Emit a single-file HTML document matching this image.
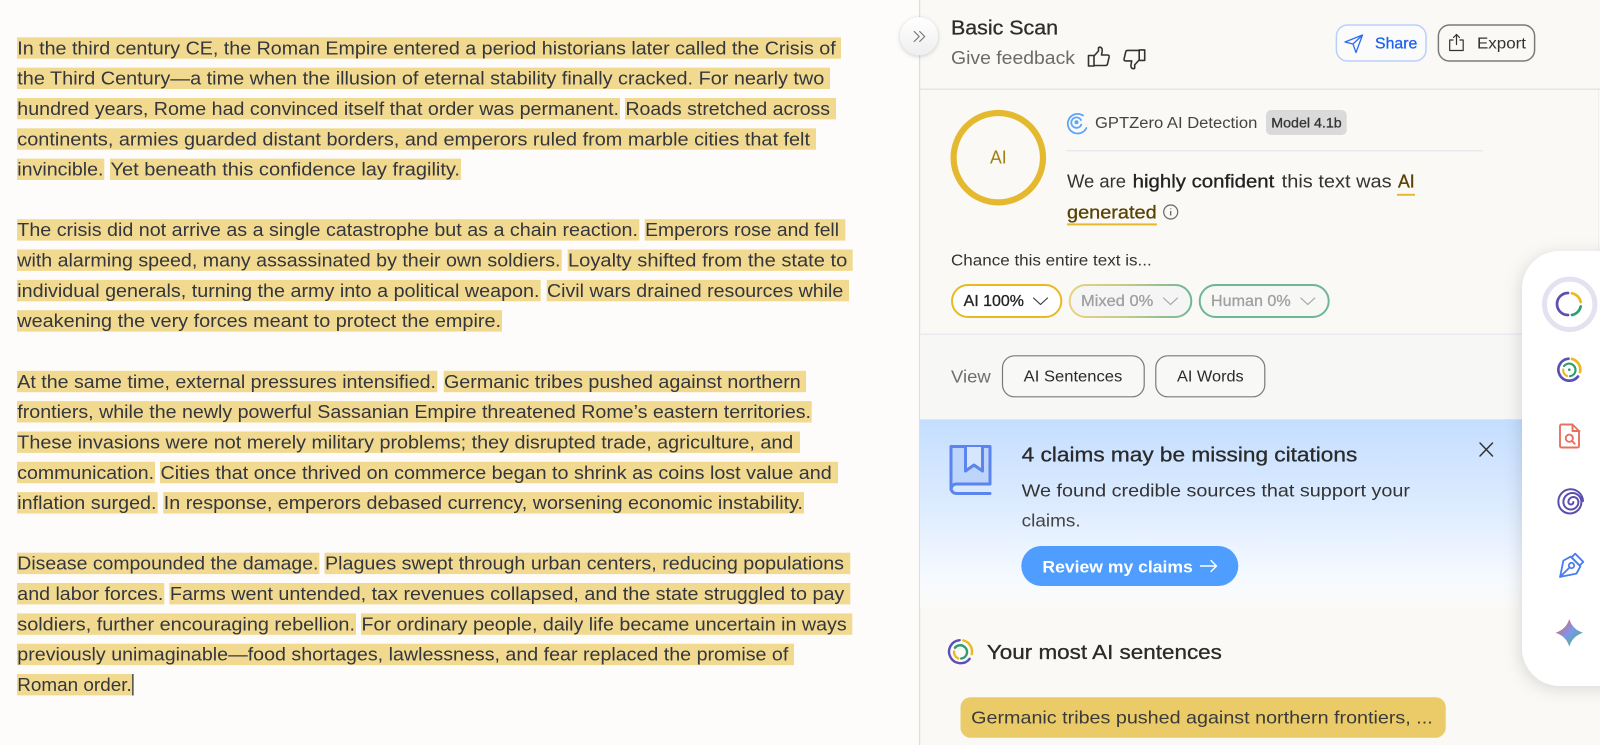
<!DOCTYPE html>
<html lang="en"><head><meta charset="utf-8"><title>Basic Scan</title>
<style>
html,body{margin:0;padding:0;width:1600px;height:745px;overflow:hidden;background:#fdfcfb}
svg{display:block}
text{font-family:"Liberation Sans",Arial,sans-serif}
.b text{font-size:18px;fill:#34363e}
.h rect{fill:#f1da90;height:21.4px}
.m{stroke:currentColor;stroke-width:.3px}
.ic{fill:none;stroke-linecap:round;stroke-linejoin:round}
</style></head><body>
<svg width="1600" height="745" viewBox="0 0 1600 745" xmlns="http://www.w3.org/2000/svg">
<defs>
<linearGradient id="blue" x1="0" y1="0" x2="0" y2="1"><stop offset="0" stop-color="#c4deff"/><stop offset=".45" stop-color="#dcebff"/><stop offset=".85" stop-color="#f6faff"/><stop offset="1" stop-color="#fbfaf8"/></linearGradient>
<linearGradient id="mix" gradientUnits="userSpaceOnUse" x1="1069" y1="0" x2="1192" y2="0"><stop offset="0" stop-color="#ead27e"/><stop offset=".45" stop-color="#c5cb86"/><stop offset="1" stop-color="#6fb698"/></linearGradient>
<linearGradient id="star" x1="0" y1="0" x2="1" y2="1"><stop offset=".1" stop-color="#e2645e"/><stop offset=".5" stop-color="#7a98ee"/><stop offset=".9" stop-color="#4fb07a"/></linearGradient>
<linearGradient id="cb" x1="0" y1="0" x2="0" y2="1"><stop offset="0" stop-color="#fff"/><stop offset="1" stop-color="#eeeef0"/></linearGradient>
<filter id="sh" x="-30%" y="-10%" width="160%" height="120%"><feDropShadow dx="-2" dy="3" stdDeviation="8" flood-color="#000" flood-opacity=".13"/></filter>
<filter id="sh2" x="-40%" y="-40%" width="180%" height="180%"><feDropShadow dx="0" dy="1" stdDeviation="2" flood-color="#000" flood-opacity=".2"/></filter>
</defs>

<rect width="1600" height="745" fill="#fdfcfb"/>

<g class="h">
<rect x="17" y="37.3" width="824"/>
<rect x="17" y="67.6" width="813"/>
<rect x="17" y="98" width="603"/><rect x="625" y="98" width="211"/>
<rect x="17" y="128.3" width="799"/>
<rect x="17" y="158.6" width="87.3"/><rect x="110" y="158.6" width="351"/>
<rect x="17" y="219.2" width="622.3"/><rect x="644.7" y="219.2" width="200.6"/>
<rect x="17" y="249.5" width="544.7"/><rect x="567.7" y="249.5" width="285"/>
<rect x="17" y="279.9" width="523.7"/><rect x="546.7" y="279.9" width="302.3"/>
<rect x="17" y="310.2" width="485"/>
<rect x="17" y="370.8" width="420.3"/><rect x="443.7" y="370.8" width="362.3"/>
<rect x="17" y="401.1" width="794.7"/>
<rect x="17" y="431.5" width="783"/>
<rect x="17" y="461.8" width="138"/><rect x="160" y="461.8" width="678"/>
<rect x="17" y="492.1" width="140.7"/><rect x="163.3" y="492.1" width="640.7"/>
<rect x="17" y="552.7" width="302.4"/><rect x="324.5" y="552.7" width="525.8"/>
<rect x="17" y="583" width="147.3"/><rect x="169.4" y="583" width="680.9"/>
<rect x="17" y="613.4" width="339"/><rect x="361" y="613.4" width="491.3"/>
<rect x="17" y="643.7" width="777"/>
<rect x="17" y="674" width="115.7"/>
</g>
<g class="b">
<text lengthAdjust="spacingAndGlyphs" x="17.3" y="54.3" textLength="818.4">In the third century CE, the Roman Empire entered a period historians later called the Crisis of</text>
<text lengthAdjust="spacingAndGlyphs" x="17.3" y="84.6" textLength="807">the Third Century—a time when the illusion of eternal stability finally cracked. For nearly two</text>
<text lengthAdjust="spacingAndGlyphs" x="17.3" y="115" textLength="601.7">hundred years, Rome had convinced itself that order was permanent.</text>
<text lengthAdjust="spacingAndGlyphs" x="625.5" y="115" textLength="204.5">Roads stretched across</text>
<text lengthAdjust="spacingAndGlyphs" x="17.3" y="145.3" textLength="792.7">continents, armies guarded distant borders, and emperors ruled from marble cities that felt</text>
<text lengthAdjust="spacingAndGlyphs" x="17.3" y="175.6" textLength="86.2">invincible.</text>
<text lengthAdjust="spacingAndGlyphs" x="110.5" y="175.6" textLength="349.5">Yet beneath this confidence lay fragility.</text>
<text lengthAdjust="spacingAndGlyphs" x="17.3" y="236.2" textLength="620.7">The crisis did not arrive as a single catastrophe but as a chain reaction.</text>
<text lengthAdjust="spacingAndGlyphs" x="645.2" y="236.2" textLength="193.8">Emperors rose and fell</text>
<text lengthAdjust="spacingAndGlyphs" x="17.3" y="266.5" textLength="543.2">with alarming speed, many assassinated by their own soldiers.</text>
<text lengthAdjust="spacingAndGlyphs" x="568" y="266.5" textLength="279.3">Loyalty shifted from the state to</text>
<text lengthAdjust="spacingAndGlyphs" x="17.3" y="296.9" textLength="522.2">individual generals, turning the army into a political weapon.</text>
<text lengthAdjust="spacingAndGlyphs" x="547" y="296.9" textLength="296.3">Civil wars drained resources while</text>
<text lengthAdjust="spacingAndGlyphs" x="17.3" y="327.2" textLength="483.7">weakening the very forces meant to protect the empire.</text>
<text lengthAdjust="spacingAndGlyphs" x="17.3" y="387.8" textLength="418.7">At the same time, external pressures intensified.</text>
<text lengthAdjust="spacingAndGlyphs" x="444" y="387.8" textLength="356.7">Germanic tribes pushed against northern</text>
<text lengthAdjust="spacingAndGlyphs" x="17.3" y="418.1" textLength="793.7">frontiers, while the newly powerful Sassanian Empire threatened Rome’s eastern territories.</text>
<text lengthAdjust="spacingAndGlyphs" x="17.3" y="448.5" textLength="776">These invasions were not merely military problems; they disrupted trade, agriculture, and</text>
<text lengthAdjust="spacingAndGlyphs" x="17.3" y="478.8" textLength="136.7">communication.</text>
<text lengthAdjust="spacingAndGlyphs" x="160.5" y="478.8" textLength="671.2">Cities that once thrived on commerce began to shrink as coins lost value and</text>
<text lengthAdjust="spacingAndGlyphs" x="17.3" y="509.1" textLength="139.2">inflation surged.</text>
<text lengthAdjust="spacingAndGlyphs" x="163.8" y="509.1" textLength="639.2">In response, emperors debased currency, worsening economic instability.</text>
<text lengthAdjust="spacingAndGlyphs" x="17.3" y="569.7" textLength="301.1">Disease compounded the damage.</text>
<text lengthAdjust="spacingAndGlyphs" x="325" y="569.7" textLength="519">Plagues swept through urban centers, reducing populations</text>
<text lengthAdjust="spacingAndGlyphs" x="17.3" y="600" textLength="146">and labor forces.</text>
<text lengthAdjust="spacingAndGlyphs" x="169.9" y="600" textLength="674.4">Farms went untended, tax revenues collapsed, and the state struggled to pay</text>
<text lengthAdjust="spacingAndGlyphs" x="17.3" y="630.4" textLength="337.7">soldiers, further encouraging rebellion.</text>
<text lengthAdjust="spacingAndGlyphs" x="361.5" y="630.4" textLength="485.2">For ordinary people, daily life became uncertain in ways</text>
<text lengthAdjust="spacingAndGlyphs" x="17.3" y="660.7" textLength="771">previously unimaginable—food shortages, lawlessness, and fear replaced the promise of</text>
<text lengthAdjust="spacingAndGlyphs" x="17.3" y="691" textLength="114.4">Roman order.</text>
</g>
<rect x="132.3" y="674" width="1.2" height="21.5" fill="#1a2238"/>

<!-- right panel -->
<rect x="919" y="0" width="681" height="745" fill="#faf9f6"/>
<rect x="919" y="0" width="1.2" height="745" fill="#dcdcdc"/>
<rect x="920" y="88.4" width="680" height="1.6" fill="#e8e7e5"/>
<rect x="920" y="335" width="680" height="85" fill="#f7f7f6"/>
<rect x="920" y="333.6" width="680" height="1.2" fill="#e6e7ef"/>
<rect x="920" y="419.3" width="680" height="188" fill="url(#blue)"/>
<rect x="1598" y="90" width="1" height="160" fill="#f1f0ee"/>

<circle cx="919" cy="36.3" r="19" fill="url(#cb)" filter="url(#sh2)"/>
<path class="ic" d="M914.2 31.5l5 5-5 5M919.7 31.5l5 5-5 5" stroke="#777" stroke-width="1.2"/>

<text lengthAdjust="spacingAndGlyphs" x="951" y="34.7" font-size="20.5" textLength="107" fill="#2d2d2d" color="#2d2d2d" class="m">Basic Scan</text>
<text lengthAdjust="spacingAndGlyphs" x="951" y="64" font-size="18.5" textLength="124" fill="#6b6b6b">Give feedback</text>
<g class="ic" stroke="#333" stroke-width="1.6">
<path d="M1088.5 55.5h5.5v10.5h-5.5zM1094 56l4.5-5v-3q0-1 1.5-.8q3 .6 2 5l-.5 2.8h6q2 0 1.6 2l-1.6 7q-.3 1.5-2 1.5H1094"/>
<path transform="translate(35.2 2.5) rotate(180 1099 56.7)" d="M1088.5 55.5h5.5v10.5h-5.5zM1094 56l4.5-5v-3q0-1 1.5-.8q3 .6 2 5l-.5 2.8h6q2 0 1.6 2l-1.6 7q-.3 1.5-2 1.5H1094"/>
</g>

<rect x="1336.4" y="25" width="89.6" height="36" rx="11" fill="#fbfbfb" stroke="#b9cffb" stroke-width="1.5"/>
<path class="ic" d="M1345 42L1362.5 35L1356 52.5L1353 44ZM1353 44L1362.5 35" stroke="#2d6cf0" stroke-width="1.3"/>
<text lengthAdjust="spacingAndGlyphs" x="1375" y="48.7" font-size="16" textLength="42.3" fill="#1d62f0" color="#1d62f0" class="m">Share</text>
<rect x="1438.4" y="25" width="96.2" height="36" rx="11" fill="#faf9f6" stroke="#7a7a7a" stroke-width="1.5"/>
<path class="ic" d="M1453 40h-3.3v10.5h13.500V40h-3.3M1456.500 44.500V34.500M1453.500 37.500l3-3 3 3" stroke="#333" stroke-width="1.2"/>
<text lengthAdjust="spacingAndGlyphs" x="1477" y="48.7" font-size="16" textLength="49" fill="#333">Export</text>

<circle cx="998.3" cy="157.7" r="44.7" fill="none" stroke="#e5b92f" stroke-width="6.2"/>
<text lengthAdjust="spacingAndGlyphs" x="990" y="163.7" font-size="18" textLength="16.7" fill="#a37f10">AI</text>

<g class="ic" stroke="#5fa5f5" stroke-width="1.8">
<path d="M1083 115.5A9.8 9.8 0 1 0 1086.4 128"/>
<path d="M1081 120A5.2 5.2 0 1 0 1081.3 124.6"/>
</g>
<circle cx="1076.5" cy="122.3" r="2" fill="#5fa5f5"/>
<text lengthAdjust="spacingAndGlyphs" x="1095" y="128" font-size="15.5" textLength="162.3" fill="#444">GPTZero AI Detection</text>
<rect x="1266" y="110" width="80.7" height="25" rx="5" fill="#dadada"/>
<text lengthAdjust="spacingAndGlyphs" x="1271.3" y="127.3" font-size="14" textLength="70.4" fill="#333" color="#333" class="m">Model 4.1b</text>
<rect x="1066.7" y="150" width="416.6" height="1.4" fill="#e9e8ed"/>

<text lengthAdjust="spacingAndGlyphs" x="1067" y="187.7" font-size="18.5" textLength="59" fill="#333">We are</text>
<text lengthAdjust="spacingAndGlyphs" x="1132.7" y="187.7" font-size="18.5" textLength="141.6" fill="#222" color="#222" class="m">highly confident</text>
<text lengthAdjust="spacingAndGlyphs" x="1281.7" y="187.7" font-size="18.5" textLength="110" fill="#333">this text was</text>
<text lengthAdjust="spacingAndGlyphs" x="1398" y="187.7" font-size="18.5" textLength="16.7" fill="#5a4200" color="#5a4200" class="m">AI</text>
<rect x="1397" y="193.8" width="18" height="2" fill="#e5b92f"/>
<text lengthAdjust="spacingAndGlyphs" x="1067" y="218.3" font-size="18.5" textLength="89.7" fill="#5a4200" color="#5a4200" class="m">generated</text>
<rect x="1067" y="223.4" width="90" height="2" fill="#e5b92f"/>
<circle cx="1170.7" cy="212" r="7" fill="none" stroke="#666" stroke-width="1.2"/>
<path d="M1170.7 211v4.5M1170.7 208.4v.8" stroke="#666" stroke-width="1.3" fill="none"/>

<text lengthAdjust="spacingAndGlyphs" x="951" y="265.3" font-size="15.5" textLength="200.7" fill="#333">Chance this entire text is...</text>

<rect x="952" y="285" width="109.3" height="32" rx="16" fill="#fff" stroke="#e8b923" stroke-width="2"/>
<text lengthAdjust="spacingAndGlyphs" x="963.7" y="306" font-size="15.5" textLength="60.3" fill="#222" color="#222" class="m">AI 100%</text>
<path class="ic" d="M1033.5 298l7 6.5 7-6.500" stroke="#333" stroke-width="1.1"/>
<rect x="1069.7" y="285" width="121.6" height="32" rx="16" fill="#f5f5f5" stroke="url(#mix)" stroke-width="2"/>
<text lengthAdjust="spacingAndGlyphs" x="1081" y="306" font-size="15.5" textLength="72.3" fill="#a0a0a0" color="#a0a0a0" class="m">Mixed 0%</text>
<path class="ic" d="M1163.5 298l7 6.5 7-6.500" stroke="#a0a0a0" stroke-width="1.1"/>
<rect x="1199.7" y="285" width="129" height="32" rx="16" fill="#f7f7f6" stroke="#6fb698" stroke-width="2"/>
<text lengthAdjust="spacingAndGlyphs" x="1211" y="306" font-size="15.5" textLength="79.7" fill="#a0a0a0" color="#a0a0a0" class="m">Human 0%</text>
<path class="ic" d="M1300.8 298l7 6.5 7-6.500" stroke="#a0a0a0" stroke-width="1.1"/>

<text lengthAdjust="spacingAndGlyphs" x="951" y="382.3" font-size="17.5" textLength="39.7" fill="#6d6d6d">View</text>
<rect x="1002.5" y="355.8" width="141.7" height="41" rx="12" fill="#f8f8f7" stroke="#7a7a7a" stroke-width="1.2"/>
<text lengthAdjust="spacingAndGlyphs" x="1023.7" y="381.3" font-size="15.5" textLength="98.6" fill="#2a2a2a">AI Sentences</text>
<rect x="1155.8" y="355.8" width="109" height="41" rx="12" fill="#f8f8f7" stroke="#7a7a7a" stroke-width="1.2"/>
<text lengthAdjust="spacingAndGlyphs" x="1177" y="381.3" font-size="15.5" textLength="66.7" fill="#2a2a2a">AI Words</text>

<!-- banner -->
<path d="M951 446.5H990V484H956.5a5.5 5.5 0 0 0-5.5 5.5Z" fill="#bdd5fb" stroke="#5b84ee" stroke-width="3" stroke-linejoin="round"/>
<path d="M951 488a5.500 5.500 0 0 0 5.500 5.500H990" fill="none" stroke="#5b84ee" stroke-width="3" stroke-linecap="round"/>
<path d="M965.5 447V471L974 465L982.5 471V447" fill="#d6e6fd" stroke="#5b84ee" stroke-width="3" stroke-linejoin="round"/>
<text lengthAdjust="spacingAndGlyphs" x="1021.7" y="461.7" font-size="20" textLength="335.6" fill="#2a2a2a" color="#2a2a2a" class="m">4 claims may be missing citations</text>
<text lengthAdjust="spacingAndGlyphs" x="1021.7" y="496.7" font-size="17.5" textLength="388.3" fill="#333">We found credible sources that support your</text>
<text lengthAdjust="spacingAndGlyphs" x="1021.7" y="526.7" font-size="17.5" textLength="58.9" fill="#444">claims.</text>
<path class="ic" d="M1480 443l12.500 13M1492.500 443l-12.500 13" stroke="#333" stroke-width="1.5"/>
<rect x="1021.3" y="546" width="217" height="40" rx="20" fill="#4f9eff"/>
<text lengthAdjust="spacingAndGlyphs" x="1042.4" y="572.7" font-size="17" font-weight="700" textLength="150.4" fill="#fff">Review my claims</text>
<path class="ic" d="M1200.5 566H1216.5M1211 560.500l5.500 5.500-5.500 5.500" stroke="#fff" stroke-width="1.4"/>

<!-- most AI -->
<g transform="translate(960.5 651.7) scale(1.05) translate(-1569.3 -369.7)" class="ic" stroke-width="2.3">
<path d="M1568.5 358.7A11 11 0 1 0 1578 376.5" stroke="#5b4fb5"/>
<path d="M1572 358.9A11 11 0 0 1 1580 372" stroke="#e8b923"/>
<path d="M1564 366A6.500 6.500 0 0 1 1575.500 371A6.500 6.500 0 0 1 1570 376.200" stroke="#2e9e6e"/>
<path d="M1563.2 369.5A6.500 6.500 0 0 0 1567 376" stroke="#e8b923"/>
</g>
<text lengthAdjust="spacingAndGlyphs" x="986.9" y="659" font-size="20.5" textLength="235" fill="#2a2a2a" color="#2a2a2a" class="m">Your most AI sentences</text>
<rect x="960.5" y="697.3" width="485.2" height="40.4" rx="10" fill="#ebcb67"/>
<text lengthAdjust="spacingAndGlyphs" x="971.2" y="723.7" font-size="17.5" textLength="461.5" fill="#3a3a3a">Germanic tribes pushed against northern frontiers, ...</text>

<!-- sidebar -->
<rect x="1522" y="251" width="120" height="435" rx="38" fill="#fff" filter="url(#sh)"/>
<circle cx="1569.7" cy="304.3" r="25.2" fill="#fff" stroke="#e3e2f1" stroke-width="5"/>
<g class="ic" stroke-width="2.7">
<path d="M1568 293A11 11 0 0 0 1568 315" stroke="#5b4fb5"/>
<path d="M1572 293.3A11 11 0 0 1 1580.7 302" stroke="#e8b923"/>
<path d="M1580.7 306.5A11 11 0 0 1 1572 315" stroke="#2e9e6e"/>
<path d="M1568.5 358.7A11 11 0 1 0 1578 376.5" stroke="#5b4fb5"/>
<path d="M1572 358.9A11 11 0 0 1 1580 372" stroke="#e8b923"/>
<path d="M1564 366A6.500 6.500 0 0 1 1575.500 371A6.500 6.500 0 0 1 1570 376.200" stroke="#2e9e6e" stroke-width="2.200"/>
<path d="M1563.2 369.5A6.500 6.500 0 0 0 1567 376" stroke="#e8b923" stroke-width="2.2"/>
</g>
<circle cx="1569.3" cy="369.7" r="1.3" fill="#2e9e6e"/>
<g class="ic" stroke="#e8705f" stroke-width="1.9">
<path d="M1560 426a1.500 1.500 0 0 1 1.500-1.500h11l6.500 6.500v15a1.500 1.500 0 0 1-1.500 1.500h-16a1.500 1.500 0 0 1-1.500-1.500ZM1572.500 424.500v6.500h7"/>
<circle cx="1569.3" cy="438.2" r="3.6"/><path d="M1572 441l2.700 2.700"/>
</g>
<path class="ic" d="M1583 501A12.300 12.300 0 0 0 1558.400 502A11.500 11.500 0 0 0 1581.400 502A9 9 0 0 0 1563.400 502A7.500 7.500 0 0 0 1578.400 502A5 5 0 0 0 1568.400 502A2.500 2.500 0 0 0 1573.400 502" stroke="#5a4fae" stroke-width="2"/>
<g transform="translate(1571.500 565.500) rotate(45) scale(1.150)" class="ic" stroke="#4b7cf0" stroke-width="1.600">
<path d="M0 14L-8 2L-6-5H6L8 2Z"/><path d="M-5-9.500h10v4.500h-10z"/><circle cx="0" cy="0" r="2.300"/><path d="M0 2.300V14"/>
</g>
<path d="M1569.300 619Q1572.500 629.500 1583 632.700Q1572.500 636 1569.300 646.500Q1566 636 1555.500 632.700Q1566 629.500 1569.300 619Z" fill="url(#star)"/>
</svg>
</body></html>
